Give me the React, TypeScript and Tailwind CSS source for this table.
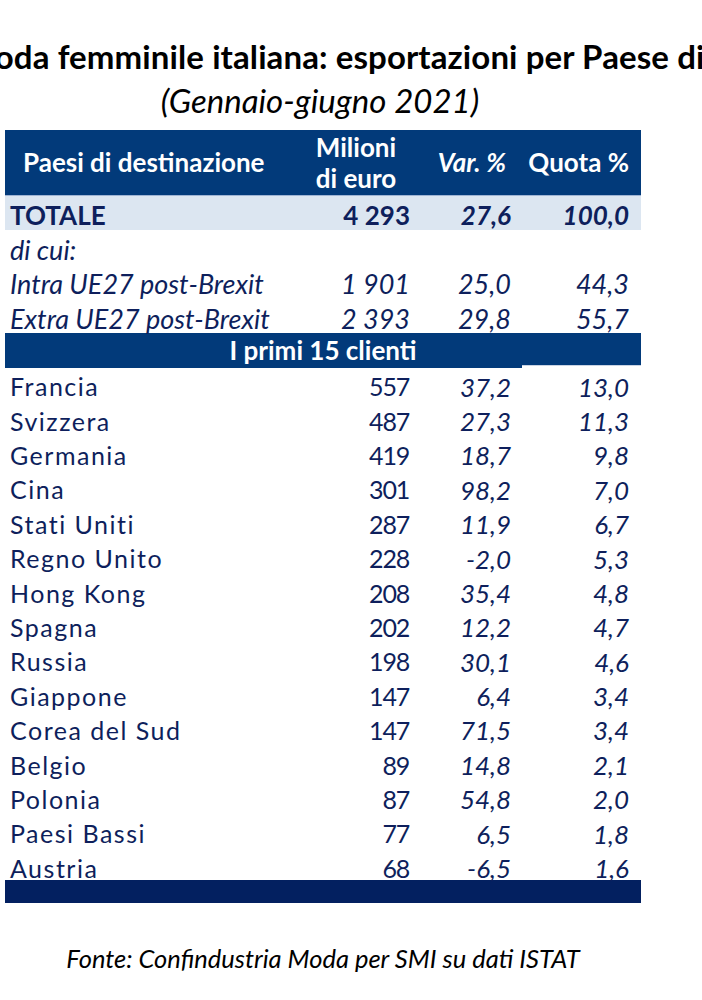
const rows: [string, string, string, string][] = [
  ["Francia", "557", "37,2", "13,0"],
  ["Svizzera", "487", "27,3", "11,3"],
  ["Germania", "419", "18,7", "9,8"],
  ["Cina", "301", "98,2", "7,0"],
  ["Stati Uniti", "287", "11,9", "6,7"],
  ["Regno Unito", "228", "-2,0", "5,3"],
  ["Hong Kong", "208", "35,4", "4,8"],
  ["Spagna", "202", "12,2", "4,7"],
  ["Russia", "198", "30,1", "4,6"],
  ["Giappone", "147", "6,4", "3,4"],
  ["Corea del Sud", "147", "71,5", "3,4"],
  ["Belgio", "89", "14,8", "2,1"],
  ["Polonia", "87", "54,8", "2,0"],
  ["Paesi Bassi", "77", "6,5", "1,8"],
  ["Austria", "68", "-6,5", "1,6"],
];

const grid = "grid grid-cols-[1fr_110px_101px_118px] pr-[12px] items-center";

export default function App() {
  return (
    <div className="w-[702px] h-[1000px] bg-white font-['Lato','Open_Sans',sans-serif] text-[#0e1f5c] overflow-hidden">
      {/* title, cut on both sides like the original */}
      <div className="pt-[38px] overflow-hidden">
        <div className="ml-[-36px] whitespace-nowrap text-[33px] font-bold text-black leading-[36px] tracking-[0.1px]">
          Moda femminile italiana: esportazioni per Paese di destinazione
        </div>
      </div>
      <div className="text-center pr-[62px] text-[33px] italic text-black leading-[40px] mt-[6px]">
        (Gennaio-giugno 2021)
      </div>

      <div className="ml-[5px] w-[636px] mt-[10px]">
        {/* header */}
        <div className={`${grid} h-[65px] bg-[#023a7a] text-white font-bold text-[26px]`}>
          <div className="pl-[18px]">Paesi di destinazione</div>
          <div className="text-center leading-[31px] pl-[2px]">
            Milioni
            <br />
            di euro
          </div>
          <div className="text-right italic pr-[5px]">Var. %</div>
          <div className="text-right">Quota %</div>
        </div>

        {/* totale */}
        <div className={`${grid} h-[35px] bg-[#dce6f1] font-bold text-[26px] border-t border-[#9fb4d4] pb-[2px]`}>
          <div className="pl-[5px]">TOTALE</div>
          <div className="text-right">4 293</div>
          <div className="text-right italic">27,6</div>
          <div className="text-right italic">100,0</div>
        </div>

        <div className={`${grid} h-[34.4px] italic text-[27px] pb-[3px]`}>
          <div className="pl-[5px]">di cui:</div>
        </div>
        <div className={`${grid} h-[34.4px] italic text-[27px] pb-[3px]`}>
          <div className="pl-[5px]">Intra UE27 post-Brexit</div>
          <div className="text-right">1 901</div>
          <div className="text-right">25,0</div>
          <div className="text-right">44,3</div>
        </div>
        <div className={`${grid} h-[34.4px] italic text-[27px] pb-[3px]`}>
          <div className="pl-[5px]">Extra UE27 post-Brexit</div>
          <div className="text-right">2 393</div>
          <div className="text-right">29,8</div>
          <div className="text-right">55,7</div>
        </div>

        {/* band */}
        <div className="h-[31.4px] bg-[#023a7a] text-white font-bold text-[26px] leading-none flex items-end justify-center pb-[2px]">
          I primi 15 clienti
        </div>
        <div className="flex h-[3px]">
          <div className="w-[517px] bg-[#023a7a]" />
          <div className="flex-1 border-t border-[#c9d3e3]" />
        </div>

        {rows.map(([name, val, v, q]) => (
          <div key={name} className={`${grid} h-[34.4px] pb-[5px]`}>
            <div className="pl-[5px] text-[25px] tracking-[1.5px]">{name}</div>
            <div className="text-right text-[25px] tracking-[-1.2px] pr-[1px]">{val}</div>
            <div className="text-right italic text-[26px]">{v}</div>
            <div className="text-right italic text-[26px]">{q}</div>
          </div>
        ))}

        <div className="h-[23px] bg-[#032060] mt-[-3px]" />
      </div>

      <div className="mt-[36px] text-center pr-[56px] italic text-[25.5px] text-black">
        Fonte: Confindustria Moda per SMI su dati ISTAT
      </div>
    </div>
  );
}
